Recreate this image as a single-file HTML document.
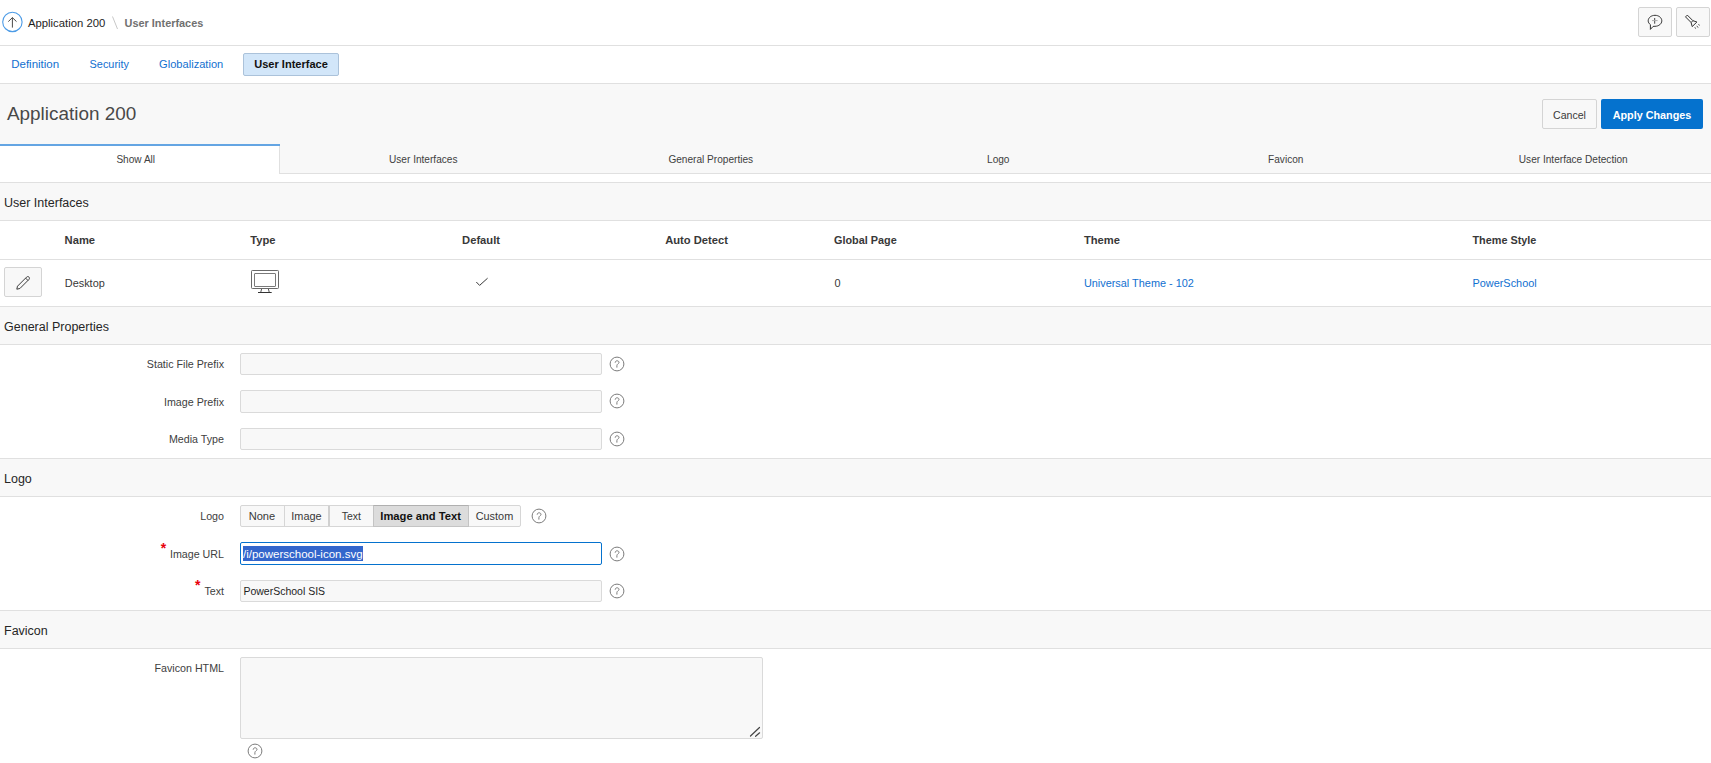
<!DOCTYPE html>
<html><head><meta charset="utf-8">
<style>
html,body{margin:0;padding:0;background:#fff;}
body{width:1711px;height:763px;overflow:hidden;position:relative;font-family:"Liberation Sans",sans-serif;color:#262626;}
.a{position:absolute;}
.t{position:absolute;white-space:nowrap;line-height:1;}
.hl{position:absolute;left:0;width:1711px;height:1px;background:#e0e0e0;}
.bg{position:absolute;left:0;width:1711px;background:#f8f8f8;}
.btn{position:absolute;box-sizing:border-box;border:1px solid #d4d4d4;border-radius:2px;background:#f8f8f8;}
.inp{position:absolute;box-sizing:border-box;border:1px solid #dadada;border-radius:2px;background:#f8f8f8;}
.lbl{position:absolute;white-space:nowrap;line-height:1;font-size:10.7px;color:#404040;right:1487px;}
.sh{position:absolute;white-space:nowrap;line-height:1;font-size:12.5px;color:#262626;left:4px;}
.th{position:absolute;white-space:nowrap;line-height:1;font-size:11.2px;font-weight:bold;color:#383838;}
.td{position:absolute;white-space:nowrap;line-height:1;font-size:10.9px;color:#383838;}
.lnk{color:#1270d0;}
.tab{position:absolute;white-space:nowrap;line-height:1;font-size:10.1px;color:#404040;text-align:center;width:300px;}
.help{position:absolute;}
</style></head><body>

<!-- HEADER -->
<svg class="a" style="left:0;top:9px" width="26" height="26" viewBox="0 9 26 26">
  <circle cx="12.4" cy="21.9" r="9.7" fill="none" stroke="#4c9be6" stroke-width="1.1"/>
  <path d="M12.4 17.6 V27.6 M8.3 21.6 L12.4 17.6 L16.5 21.6" fill="none" stroke="#4a4a4a" stroke-width="1"/>
</svg>
<div class="t" style="left:28px;top:17.7px;font-size:11.3px;color:#1e1e1e">Application 200</div>
<svg class="a" style="left:110px;top:14px" width="10" height="18"><path d="M2.5 2.5 L7.5 15" stroke="#c8c8c8" stroke-width="1"/></svg>
<div class="t" style="left:124.6px;top:17.7px;font-size:10.9px;font-weight:bold;color:#707070">User Interfaces</div>

<div class="btn" style="left:1638px;top:7px;width:34px;height:30px"></div>
<div class="btn" style="left:1676px;top:7px;width:34px;height:30px"></div>

<div class="hl" style="top:45px"></div>

<!-- TAB BAR -->
<div class="t lnk" style="left:11.2px;top:58.7px;font-size:11.5px">Definition</div>
<div class="t lnk" style="left:89.6px;top:58.7px;font-size:10.9px">Security</div>
<div class="t lnk" style="left:159.1px;top:58.7px;font-size:11.1px">Globalization</div>
<div class="a" style="left:243px;top:53px;width:96px;height:23px;box-sizing:border-box;background:#d2e6f9;border:1px solid #abc2da;border-radius:2px"></div>
<div class="t" style="left:254.2px;top:58.7px;font-size:11.05px;font-weight:bold;color:#111">User Interface</div>

<div class="hl" style="top:83px"></div>

<!-- TITLE REGION -->
<div class="bg" style="top:84px;height:90px"></div>
<div class="t" style="left:7px;top:105.4px;font-size:18.9px;color:#484848">Application 200</div>
<div class="btn" style="left:1542px;top:99px;width:55px;height:30px;background:#f8f8f8"></div>
<div class="t" style="left:1553px;top:109.7px;font-size:10.6px;color:#3a3a3a">Cancel</div>
<div class="a" style="left:1601px;top:99px;width:102px;height:30px;background:#0572ce;border-radius:2px"></div>
<div class="t" style="left:1612.7px;top:109.7px;font-size:10.8px;font-weight:bold;color:#fff">Apply Changes</div>

<!-- Tabs -->
<div class="a" style="left:0;top:144px;width:280px;height:38px;background:#fff"></div>
<div class="a" style="left:0;top:144px;width:280px;height:2px;background:#64a5e3"></div>
<div class="a" style="left:279px;top:146px;width:1px;height:28px;background:#e0e0e0"></div>
<div class="a" style="left:279px;top:173px;width:1432px;height:1px;background:#e0e0e0"></div>
<div class="tab" style="left:-14.25px;top:155px">Show All</div>
<div class="tab" style="left:273.25px;top:155px">User Interfaces</div>
<div class="tab" style="left:560.75px;top:155px">General Properties</div>
<div class="tab" style="left:848.25px;top:155px">Logo</div>
<div class="tab" style="left:1135.75px;top:155px">Favicon</div>
<div class="tab" style="left:1423.25px;top:155px">User Interface Detection</div>

<div class="hl" style="top:182px"></div>

<!-- SECTION: User Interfaces -->
<div class="bg" style="top:183px;height:37px"></div>
<div class="sh" style="top:197.2px">User Interfaces</div>
<div class="hl" style="top:220px"></div>
<div class="th" style="left:64.6px;top:234.5px">Name</div>
<div class="th" style="left:250.2px;top:234.5px">Type</div>
<div class="th" style="left:462.1px;top:234.5px">Default</div>
<div class="th" style="left:665.2px;top:234.5px">Auto Detect</div>
<div class="th" style="left:834px;top:234.5px;font-size:10.85px">Global Page</div>
<div class="th" style="left:1083.9px;top:234.5px">Theme</div>
<div class="th" style="left:1472.5px;top:234.5px;font-size:10.85px">Theme Style</div>
<div class="hl" style="top:259px"></div>
<div class="btn" style="left:4px;top:267px;width:38px;height:30px"></div>
<div class="td" style="left:64.8px;top:277.7px">Desktop</div>
<div class="td" style="left:834.5px;top:277.7px">0</div>
<div class="td lnk" style="left:1083.9px;top:277.7px">Universal Theme - 102</div>
<div class="td lnk" style="left:1472.5px;top:277.7px">PowerSchool</div>
<div class="hl" style="top:306px"></div>

<!-- SECTION: General Properties -->
<div class="bg" style="top:307px;height:37px"></div>
<div class="sh" style="top:321.3px">General Properties</div>
<div class="hl" style="top:344px"></div>
<div class="lbl" style="top:358.9px">Static File Prefix</div>
<div class="inp" style="left:240px;top:353px;width:362px;height:22px"></div>
<div class="lbl" style="top:396.9px">Image Prefix</div>
<div class="inp" style="left:240px;top:390px;width:362px;height:23px"></div>
<div class="lbl" style="top:434.2px">Media Type</div>
<div class="inp" style="left:240px;top:428px;width:362px;height:22px"></div>
<div class="hl" style="top:458px"></div>

<!-- SECTION: Logo -->
<div class="bg" style="top:459px;height:37px"></div>
<div class="sh" style="top:473.3px">Logo</div>
<div class="hl" style="top:496px"></div>
<div class="lbl" style="top:511.1px">Logo</div>

<div class="lbl" style="top:548.6px">Image URL</div>
<div class="a" style="left:240px;top:542px;width:362px;height:23px;box-sizing:border-box;border:1px solid #0572ce;border-radius:2px;background:#fff"></div>
<div class="a" style="left:243px;top:546px;width:120px;height:15px;background:#3366cc"></div>
<div class="t" style="left:243px;top:548.5px;font-size:11.5px;color:#fff">/i/powerschool-icon.svg</div>

<div class="lbl" style="top:586px">Text</div>
<div class="inp" style="left:240px;top:580px;width:362px;height:22px"></div>
<div class="t" style="left:243.4px;top:586px;font-size:10.5px;color:#1e1e1e">PowerSchool SIS</div>
<div class="hl" style="top:610px"></div>

<!-- SECTION: Favicon -->
<div class="bg" style="top:611px;height:37px"></div>
<div class="sh" style="top:625.3px">Favicon</div>
<div class="hl" style="top:648px"></div>
<div class="lbl" style="top:663px">Favicon HTML</div>
<div class="inp" style="left:240px;top:657px;width:523px;height:82px"></div>


<!-- ICONS -->
<svg class="a" style="left:609.3px;top:355.7px" width="16" height="16" viewBox="0 0 16 16"><circle cx="8" cy="8" r="6.9" fill="none" stroke="#7c7c7c" stroke-width="1"/><path d="M6.2 6.7 C6.2 5.5 7.0 4.8 8.1 4.8 C9.2 4.8 10.0 5.5 10.0 6.5 C10.0 7.6 7.9 8.0 7.9 9.6 V11.6" fill="none" stroke="#7c7c7c" stroke-width="1"/></svg>
<svg class="a" style="left:609.3px;top:393.2px" width="16" height="16" viewBox="0 0 16 16"><circle cx="8" cy="8" r="6.9" fill="none" stroke="#7c7c7c" stroke-width="1"/><path d="M6.2 6.7 C6.2 5.5 7.0 4.8 8.1 4.8 C9.2 4.8 10.0 5.5 10.0 6.5 C10.0 7.6 7.9 8.0 7.9 9.6 V11.6" fill="none" stroke="#7c7c7c" stroke-width="1"/></svg>
<svg class="a" style="left:609.3px;top:430.7px" width="16" height="16" viewBox="0 0 16 16"><circle cx="8" cy="8" r="6.9" fill="none" stroke="#7c7c7c" stroke-width="1"/><path d="M6.2 6.7 C6.2 5.5 7.0 4.8 8.1 4.8 C9.2 4.8 10.0 5.5 10.0 6.5 C10.0 7.6 7.9 8.0 7.9 9.6 V11.6" fill="none" stroke="#7c7c7c" stroke-width="1"/></svg>
<svg class="a" style="left:531.3px;top:508.2px" width="16" height="16" viewBox="0 0 16 16"><circle cx="8" cy="8" r="6.9" fill="none" stroke="#7c7c7c" stroke-width="1"/><path d="M6.2 6.7 C6.2 5.5 7.0 4.8 8.1 4.8 C9.2 4.8 10.0 5.5 10.0 6.5 C10.0 7.6 7.9 8.0 7.9 9.6 V11.6" fill="none" stroke="#7c7c7c" stroke-width="1"/></svg>
<svg class="a" style="left:609.3px;top:546.0px" width="16" height="16" viewBox="0 0 16 16"><circle cx="8" cy="8" r="6.9" fill="none" stroke="#7c7c7c" stroke-width="1"/><path d="M6.2 6.7 C6.2 5.5 7.0 4.8 8.1 4.8 C9.2 4.8 10.0 5.5 10.0 6.5 C10.0 7.6 7.9 8.0 7.9 9.6 V11.6" fill="none" stroke="#7c7c7c" stroke-width="1"/></svg>
<svg class="a" style="left:609.3px;top:583.0px" width="16" height="16" viewBox="0 0 16 16"><circle cx="8" cy="8" r="6.9" fill="none" stroke="#7c7c7c" stroke-width="1"/><path d="M6.2 6.7 C6.2 5.5 7.0 4.8 8.1 4.8 C9.2 4.8 10.0 5.5 10.0 6.5 C10.0 7.6 7.9 8.0 7.9 9.6 V11.6" fill="none" stroke="#7c7c7c" stroke-width="1"/></svg>
<svg class="a" style="left:246.5px;top:743.0px" width="16" height="16" viewBox="0 0 16 16"><circle cx="8" cy="8" r="6.9" fill="none" stroke="#7c7c7c" stroke-width="1"/><path d="M6.2 6.7 C6.2 5.5 7.0 4.8 8.1 4.8 C9.2 4.8 10.0 5.5 10.0 6.5 C10.0 7.6 7.9 8.0 7.9 9.6 V11.6" fill="none" stroke="#7c7c7c" stroke-width="1"/></svg>

<!-- header button icons -->
<svg class="a" style="left:1646px;top:14.4px" width="18" height="17" viewBox="0 0 18 17">
  <path d="M4.4 10.6 C2.9 9.6 2.2 8.3 2.2 6.8 C2.2 3.8 5.2 1.3 9 1.3 C12.8 1.3 15.8 3.8 15.8 6.8 C15.8 9.8 12.8 12.3 9 12.3 C8.2 12.3 7.6 12.3 7 12.5 L4.4 15.4 Z" fill="none" stroke="#333" stroke-width="1" stroke-linejoin="round"/>
  <path d="M8.7 4 V9.7" fill="none" stroke="#444" stroke-width="1"/>
  <path d="M6 6.6 H11.6" fill="none" stroke="#aaa" stroke-width="1"/>
</svg>
<svg class="a" style="left:1681px;top:11px" width="24" height="22" viewBox="0 0 24 22">
  <path d="M4.5 5.9 L6.3 4.1 L11.9 9.7 L10.1 11.5 Z" fill="none" stroke="#333" stroke-width="1" stroke-linejoin="round"/>
  <path d="M11.9 9.7 L15.9 11.0 L11.2 15.6 L10.1 11.5" fill="none" stroke="#333" stroke-width="1" stroke-linejoin="round"/>
  <path d="M13.9 16.3 L14.6 17.6 M15.7 15.2 L17.3 16.4 M17.4 13.5 L18.7 14.3" fill="none" stroke="#444" stroke-width="1"/>
</svg>
<!-- pencil -->
<svg class="a" style="left:14px;top:274px" width="18" height="18" viewBox="0 0 18 18">
  <path d="M2.8 15.2 L3.5 12.2 L12.6 3.1 C13.3 2.4 14.3 2.4 15.0 3.1 C15.6 3.7 15.6 4.7 15.0 5.4 L5.9 14.5 Z M11.6 4.1 L14.0 6.5" fill="none" stroke="#3a3a3a" stroke-width="1" stroke-linejoin="round"/>
</svg>
<!-- monitor -->
<svg class="a" style="left:250px;top:269px" width="31" height="25" viewBox="0 0 31 25">
  <rect x="1.5" y="1.5" width="27" height="18" rx="0.8" fill="none" stroke="#6a6a6a" stroke-width="1"/>
  <rect x="4.5" y="4.5" width="21" height="13" rx="0.5" fill="none" stroke="#7a7a7a" stroke-width="1"/>
  <path d="M11.6 20 L10.8 23 M18.4 20 L19.2 23" fill="none" stroke="#555" stroke-width="1"/>
  <path d="M8 23.5 H21.7" fill="none" stroke="#333" stroke-width="1"/>
</svg>
<!-- check -->
<svg class="a" style="left:474px;top:276px" width="16" height="12" viewBox="0 0 16 12">
  <path d="M2.3 6.0 L5.6 9.4 L13.6 2.2" fill="none" stroke="#3a3a3a" stroke-width="1"/>
</svg>
<!-- radio group -->
<div class="a" style="left:240px;top:505px;width:281px;height:22px;box-sizing:border-box;border:1px solid #d6d6d6;border-radius:2px;background:#f8f8f8"></div>
<div class="a" style="left:284px;top:506px;width:1px;height:20px;background:#d6d6d6"></div>
<div class="a" style="left:328px;top:506px;width:2px;height:20px;background:#d0d0d0"></div>
<div class="a" style="left:373px;top:505px;width:96px;height:22px;background:#dcdcdc;box-sizing:border-box;border:1px solid #c4c4c4;border-top-color:#b0b0b0"></div>
<div class="t" style="left:248.7px;top:511.1px;font-size:11.1px;color:#383838">None</div>
<div class="t" style="left:291.3px;top:511.1px;font-size:10.9px;color:#383838">Image</div>
<div class="t" style="left:341.7px;top:511.1px;font-size:10.5px;color:#383838">Text</div>
<div class="t" style="left:380.3px;top:511.1px;font-size:11.2px;font-weight:bold;color:#111">Image and Text</div>
<div class="t" style="left:475.7px;top:511.1px;font-size:10.9px;color:#383838">Custom</div>
<!-- asterisks -->
<div class="t" style="left:160.8px;top:540.5px;font-size:14px;font-weight:bold;color:#e8000b">*</div>
<div class="t" style="left:195px;top:578px;font-size:14px;font-weight:bold;color:#e8000b">*</div>
<!-- resize grip -->
<svg class="a" style="left:748px;top:725px" width="14" height="13" viewBox="0 0 14 13">
  <path d="M2.5 11 L11.5 2.5 M7.6 11.3 L11.6 7.8" fill="none" stroke="#444" stroke-width="1.2" stroke-linecap="round"/>
</svg>
</body></html>
